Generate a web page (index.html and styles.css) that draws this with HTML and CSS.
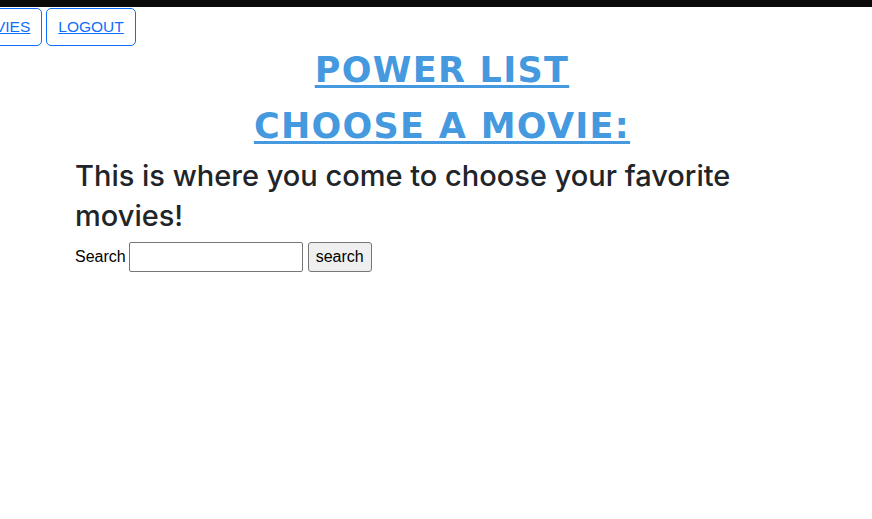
FILE: index.html
```html
<!DOCTYPE html>
<html lang="en">
<head>
<meta charset="utf-8">
<title>Power List</title>
<link rel="stylesheet" href="styles.css">
</head>
<body>
<div class="topbar"></div>
<nav class="nav">
  <a class="nav-btn" href="#">MOVIES</a>
  <a class="nav-btn" href="#">LOGOUT</a>
</nav>
<main class="main">
  <h1 class="title"><a href="#">POWER LIST</a></h1>
  <h1 class="title second"><a href="#">CHOOSE A MOVIE:</a></h1>
  <h3 class="lead">This is where you come to choose your favorite movies!</h3>
  <form class="search">
    <label for="q">Search</label>
    <input id="q" type="text">
    <button type="button">search</button>
  </form>
</main>
</body>
</html>
```

FILE: styles.css
```css
html, body {
  margin: 0;
  padding: 0;
  background: #fff;
  overflow: hidden;
}
body {
  font-family: Inter, "Liberation Sans", sans-serif;
  color: #212529;
}
.topbar {
  height: 7px;
  background: #0a0a0a;
}
.nav {
  display: flex;
  gap: 4px;
  margin-top: 1px;
  margin-left: -42px;
}
.nav-btn {
  display: inline-flex;
  align-items: center;
  height: 38px;
  box-sizing: border-box;
  padding: 0 11px;
  border: 1px solid #0d6efd;
  border-radius: 5px;
  color: #0d6efd;
  text-decoration: underline;
  font-family: "Liberation Sans", Arial, sans-serif;
  font-size: 15.5px;
}
.main {
  width: 734px;
  margin-left: 75px;
}
.title {
  margin: 0;
  text-align: center;
  font-family: "DejaVu Sans", sans-serif;
  font-weight: 700;
  font-size: 35px;
  line-height: 42px;
  letter-spacing: 1.3px;
}
.title a {
  color: #4599df;
  text-decoration: underline;
  text-decoration-thickness: 3px;
  text-underline-offset: 3px;
}
.title:first-child { margin-top: 3px; }
.second { margin-top: 14px; }
.lead {
  margin: 9px 0 6px;
  font-size: 29px;
  font-weight: 500;
  line-height: 40px;
}
.search {
  display: flex;
  align-items: center;
  gap: 3px;
  font-family: "Liberation Sans", Arial, sans-serif;
  font-size: 16px;
  color: #000;
}
.search input {
  width: 174px;
  height: 30px;
  box-sizing: border-box;
  border: 1px solid #767676;
  border-radius: 2px;
  margin: 0;
}
.search button {
  height: 30px;
  box-sizing: border-box;
  margin-left: 2px;
  font-family: "Liberation Sans", Arial, sans-serif;
  font-size: 16px;
  padding: 0 7px;
  border: 1px solid #767676;
  border-radius: 3px;
  background: #efefef;
  color: #000;
}
```
